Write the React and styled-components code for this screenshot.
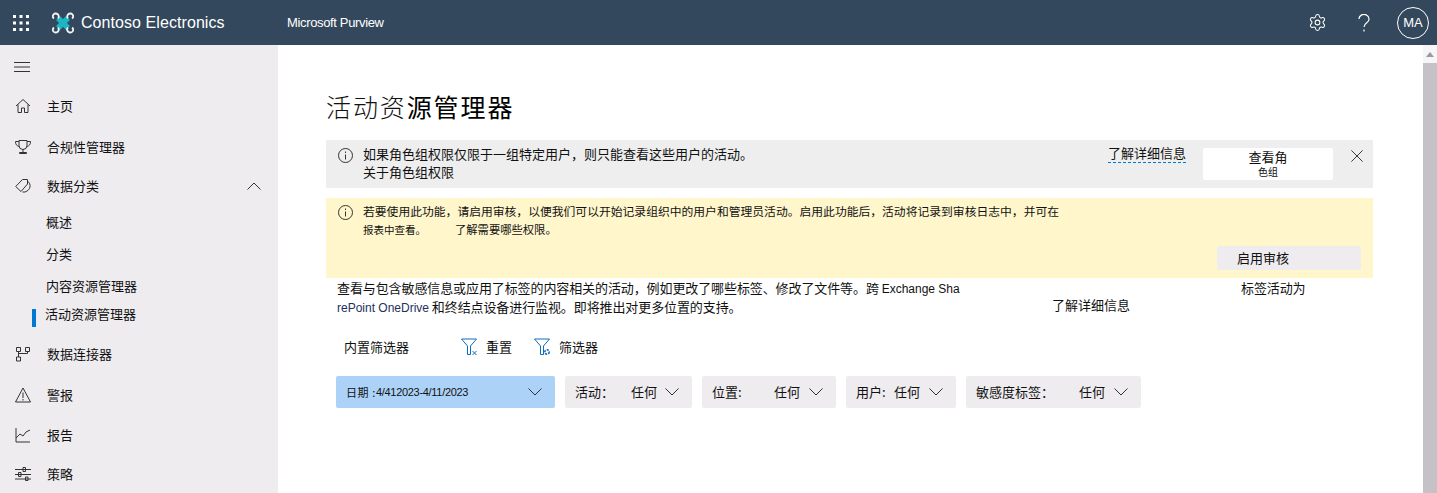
import React from 'react';
import styled, { createGlobalStyle } from 'styled-components';
import { Settings } from 'lucide-react';

const CJK = '"Noto Sans CJK SC", "Liberation Sans", sans-serif';
const LATIN = '"Liberation Sans", "Noto Sans CJK SC", sans-serif';

const Global = createGlobalStyle`
  html, body {
    margin: 0;
    height: 100%;
    overflow: hidden;
    background: #fff;
  }
  #root {
    height: 100%;
  }
  * {
    box-sizing: border-box;
  }
`;

const Page = styled.div`
  display: flex;
  flex-direction: column;
  height: 100%;
  color: #111;
  font: 13px/18px ${CJK};
`;

const TopBar = styled.header`
  display: flex;
  align-items: center;
  flex: 0 0 45px;
  padding-left: 13px;
  background: #33485c;
  color: #fff;
`;

const Brand = styled.div`
  display: flex;
  align-items: center;
  gap: 7px;
  margin-left: 23px;
  width: 235px;
  font: 16px/20px ${LATIN};
  letter-spacing: 0.07px;
`;

const Product = styled.div`
  font: 13px/20px ${LATIN};
  letter-spacing: -0.35px;
`;

const TopActions = styled.div`
  display: flex;
  align-items: center;
  margin-left: auto;
  margin-right: 8px;
`;

const HelpMark = styled.span`
  display: flex;
  margin: 0 27px 0 31px;
`;

const Avatar = styled.div`
  display: flex;
  align-items: center;
  justify-content: center;
  width: 32px;
  height: 32px;
  border: 1px solid #fff;
  border-radius: 50%;
  font: 13px/1 ${LATIN};
`;

const Body = styled.div`
  display: flex;
  flex: 1;
  min-height: 0;
`;

const Sidebar = styled.nav`
  flex: 0 0 278px;
  background: #efecf0;
  overflow: hidden;
`;

const Burger = styled.div`
  display: flex;
  align-items: center;
  height: 41px;
  padding-left: 14px;
`;

const NavRow = styled.div`
  display: flex;
  align-items: center;
  height: ${(p) => p.$h || 40}px;
  padding-left: 15px;
`;

const NavIcon = styled.span`
  display: flex;
  align-items: center;
  width: 32px;
`;

const NavEnd = styled.span`
  display: flex;
  margin-left: auto;
  margin-right: 17px;
`;

const SubList = styled.div`
  padding-bottom: 9px;
`;

const SubRow = styled.div`
  position: relative;
  display: flex;
  align-items: center;
  height: ${(p) => p.$h}px;
  padding-left: ${(p) => (p.$active ? 45 : 46)}px;
  ${(p) =>
    p.$active &&
    `
    &::before {
      content: '';
      position: absolute;
      left: 32px;
      top: 7px;
      width: 4px;
      height: 18px;
      background: #0078d4;
    }
  `}
`;

const Main = styled.main`
  flex: 1;
  min-width: 0;
  padding: 43px 50px 0 48px;
`;

const Title = styled.h1`
  margin: 0 0 16px;
  font: 400 25px/36px ${CJK};
  letter-spacing: 1.9px;
  color: #000;
`;

const Thin = styled.span`
  font-weight: 300;
  color: #111;
`;

const Banner = styled.section`
  display: flex;
  height: ${(p) => p.$h}px;
  margin-bottom: ${(p) => p.$mb || 0}px;
  padding-left: 12px;
  background: ${(p) => p.$bg};
`;

const InfoMark = styled.span`
  flex: 0 0 25px;
  padding-top: ${(p) => p.$top}px;
`;

const NoticeText = styled.div`
  flex: 0 0 745px;
  padding-top: 5px;
`;

const LearnLink = styled.a`
  flex: 0 0 95px;
  padding-top: 4px;
  span {
    border-bottom: 1px dashed #0078d4;
  }
`;

const ViewButton = styled.button`
  display: flex;
  flex-direction: column;
  align-items: center;
  flex: 0 0 130px;
  height: 32px;
  margin-top: 8px;
  padding: 0;
  border: 0;
  border-radius: 2px;
  background: #fff;
  color: #111;
  font: 13px/18px ${CJK};
  small {
    font-size: 10px;
    line-height: 12px;
  }
`;

const CloseBox = styled.span`
  display: flex;
  margin: 10px 0 0 18px;
`;

const AuditText = styled.div`
  flex: 0 0 700px;
  padding-top: 4px;
  font-size: 11.8px;
  white-space: nowrap;
  small {
    font-size: 10.5px;
  }
  em {
    margin-left: 29px;
    font-size: 11.3px;
    font-style: normal;
  }
`;

const AuditButton = styled.button`
  flex: 0 0 144px;
  align-self: flex-end;
  height: 24px;
  margin: 0 12px 8px auto;
  padding: 0 0 0 20px;
  border: 0;
  border-radius: 2px;
  background: #efecf0;
  color: #111;
  font: 13px/24px ${CJK};
  text-align: left;
`;

const Description = styled.div`
  display: grid;
  grid-template-columns: 715px 189px auto;
  grid-template-rows: 19px 20px;
  align-items: center;
  padding-left: 11px;
  letter-spacing: -0.1px;
`;

const Latin = styled.span`
  font: 12px ${LATIN};
  letter-spacing: 0;
  color: ${(p) => p.$color || 'inherit'};
`;

const RaisedLink = styled.span`
  margin-bottom: 4px;
  letter-spacing: 0;
`;

const FilterBar = styled.div`
  display: flex;
  align-items: center;
  height: 26px;
  margin: 17px 0 16px;
  padding-left: 18px;
`;

const FilterTitle = styled.span`
  flex: 0 0 117px;
`;

const FilterAction = styled.span`
  display: flex;
  align-items: center;
  gap: 8px;
  margin-right: 22px;
`;

const Chips = styled.div`
  display: flex;
  gap: 10px;
  margin-left: 10px;
`;

const Chip = styled.div`
  display: flex;
  align-items: center;
  width: ${(p) => p.$w}px;
  height: 32px;
  padding-left: 10px;
  border-radius: 2px;
  background: ${(p) => (p.$on ? '#acd3f7' : '#efecf0')};
  font-size: ${(p) => (p.$on ? 11 : 13)}px;
  svg {
    margin-left: auto;
    margin-right: 13px;
  }
`;

const ChipLabel = styled.span`
  flex: 0 0 ${(p) => p.$w}px;
`;

const DateKey = styled.span`
  flex: 0 0 28px;
  letter-spacing: 0.6px;
  white-space: nowrap;
`;

const DateValue = styled.span`
  font: 11px ${LATIN};
  letter-spacing: -0.3px;
`;

const Scrollbar = styled.aside`
  display: flex;
  flex-direction: column;
  align-items: center;
  flex: 0 0 14px;
  background: #f6f5f7;
`;

const ScrollUp = styled.span`
  flex: 0 0 5px;
  width: 0;
  margin: 7px 0 6px;
  border-left: 4px solid transparent;
  border-right: 4px solid transparent;
  border-bottom: 5px solid #9b999e;
`;

const ScrollThumb = styled.span`
  flex: 1;
  width: 14px;
  background: #c4c2c6;
`;

const Stroke = ({ size = 16, children }) => (
  <svg width={size} height={size} viewBox="0 0 16 16" fill="none" stroke="#333" strokeWidth="1">
    {children}
  </svg>
);

const Chevron = ({ up }) => (
  <svg width="14" height="8" viewBox="0 0 14 8" fill="none" stroke="#333">
    <path d={up ? 'M.5 7.5L7 1l6.5 6.5' : 'M.5.5L7 7l6.5-6.5'} />
  </svg>
);

const Waffle = () => (
  <svg width="16" height="16" viewBox="0 0 16 16" fill="#fff">
    {[0, 6.5, 13].map((y) =>
      [0, 6.5, 13].map((x) => <rect key={`${x}-${y}`} x={x} y={y} width="3" height="3" />),
    )}
  </svg>
);

const Logo = () => (
  <svg width="22" height="22" viewBox="0 0 22 22" fill="none">
    <path d="M6 6l10 10M16 6L6 16" stroke="#1cb5c4" strokeWidth="5.5" />
    <g stroke="#f0f4f6" strokeWidth="1.8">
      <path d="M6 6.5A3 3 0 1 0 1.5 2.5a3 3 0 0 0 .4 4" />
      <path d="M16 6.5a3 3 0 1 1 4.5-4 3 3 0 0 1-.4 4" />
      <path d="M6 15.5a3 3 0 1 1-4.5 4 3 3 0 0 1 .4-4" />
      <path d="M16 15.5a3 3 0 1 0 4.5 4 3 3 0 0 0-.4-4" />
    </g>
  </svg>
);

const Help = () => (
  <svg width="12" height="18" viewBox="0 0 12 18" fill="none" stroke="#fff" strokeWidth="1.2">
    <path d="M1 5a5 4.5 0 1 1 8 3.5C7 10 6 11 6 13M6 15.5v2" />
  </svg>
);

const Info = () => (
  <svg width="15" height="15" viewBox="0 0 15 15" fill="none" stroke="#333">
    <circle cx="7.5" cy="7.5" r="7" />
    <path d="M7.5 6.5v5M7.5 3.5v1.5" />
  </svg>
);

const Funnel = ({ badge }) => (
  <svg width="17" height="18" viewBox="0 0 17 18" fill="none" stroke="#0f6cbd">
    <path d="M.5 1h15L9.5 8v8.5h-3V8z" />
    {badge === 'x' ? (
      <path d="M11.5 13l4 4M15.5 13l-4 4" />
    ) : (
      <circle cx="13" cy="14" r="2.2" strokeWidth="1.6" strokeDasharray="2 1" />
    )}
  </svg>
);

const icons = {
  home: <path d="M1 8l7-6.5L15 8M3 6.5v8h3.5V10h3v4.5H13v-8" />,
  trophy: (
    <path d="M4 1.5h8v5a4 4 0 0 1-8 0zM4 2.5H.5c0 3 1.2 4.5 3.8 5M12 2.5h3.5c0 3-1.2 4.5-3.8 5M8 10.5v3M4.5 14.5h7v-1h-7z" />
  ),
  tag: (
    <g>
      <path d="M.7 8.5L7.5 1.5h5V6L6 13.5z" />
      <path d="M12.5 3C16.5 6 16 12 10 14H7.5" />
    </g>
  ),
  connector: <path d="M1.5 1.5h4v4h-4zM10.5 1.5h4v4h-4zM1.5 11h4v4h-4zM3.5 5.5V11M12.5 5.5v2h-9" />,
  alert: <path d="M8 1L.5 15h15zM8 5.5v5.5M8 12v1.5" />,
  chart: <path d="M1 1v14h14M1 11l4-4 3 2 3-4 4-2" />,
  policy: (
    <path d="M0 3.5h16M0 8.5h16M0 13h16M8 1.5h2.5v4H8zM3.5 6.5H6v4H3.5zM10.5 11H13v3.5h-2.5z" />
  ),
};

const NavItem = ({ icon, label, h, end }) => (
  <NavRow $h={h}>
    <NavIcon>
      <Stroke>{icons[icon]}</Stroke>
    </NavIcon>
    {label}
    {end && <NavEnd>{end}</NavEnd>}
  </NavRow>
);

const FilterChip = ({ w, labelW, label }) => (
  <Chip $w={w}>
    <ChipLabel $w={labelW}>{label}</ChipLabel>
    任何
    <Chevron />
  </Chip>
);

const App = () => (
  <Page>
    <Global />
    <TopBar>
      <Waffle />
      <Brand>
        <Logo />
        Contoso Electronics
      </Brand>
      <Product>Microsoft Purview</Product>
      <TopActions>
        <Settings size={19} strokeWidth={1.3} />
        <HelpMark>
          <Help />
        </HelpMark>
        <Avatar>MA</Avatar>
      </TopActions>
    </TopBar>
    <Body>
      <Sidebar>
        <Burger>
          <Stroke>
            <path d="M0 4.5h16M0 9h16M0 13.5h16" />
          </Stroke>
        </Burger>
        <NavItem icon="home" label="主页" />
        <NavItem icon="trophy" label="合规性管理器" h={41} />
        <NavItem icon="tag" label="数据分类" h={38} end={<Chevron up />} />
        <SubList>
          <SubRow $h={33}>概述</SubRow>
          <SubRow $h={32}>分类</SubRow>
          <SubRow $h={32}>内容资源管理器</SubRow>
          <SubRow $h={23} $active>
            活动资源管理器
          </SubRow>
        </SubList>
        <NavItem icon="connector" label="数据连接器" />
        <NavItem icon="alert" label="警报" h={41} />
        <NavItem icon="chart" label="报告" h={39} />
        <NavItem icon="policy" label="策略" />
      </Sidebar>
      <Main>
        <Title>
          <Thin>活动资</Thin>源管理器
        </Title>
        <Banner $bg="#eeeeee" $h={48} $mb={10}>
          <InfoMark $top={8}>
            <Info />
          </InfoMark>
          <NoticeText>
            如果角色组权限仅限于一组特定用户，则只能查看这些用户的活动。
            <br />
            关于角色组权限
          </NoticeText>
          <LearnLink>
            <span>了解详细信息</span>
          </LearnLink>
          <ViewButton>
            查看角
            <small>色组</small>
          </ViewButton>
          <CloseBox>
            <Stroke size={12}>
              <path d="M.5.5l15 15M15.5.5l-15 15" strokeWidth="1.3" />
            </Stroke>
          </CloseBox>
        </Banner>
        <Banner $bg="#fff6cc" $h={80}>
          <InfoMark $top={7}>
            <Info />
          </InfoMark>
          <AuditText>
            若要使用此功能，请启用审核，以便我们可以开始记录组织中的用户和管理员活动。启用此功能后，活动将记录到审核日志中，并可在
            <br />
            <small>报表中查看。</small>
            <em>了解需要哪些权限。</em>
          </AuditText>
          <AuditButton>启用审核</AuditButton>
        </Banner>
        <Description>
          <span>
            查看与包含敏感信息或应用了标签的内容相关的活动，例如更改了哪些标签、修改了文件等。跨{' '}
            <Latin>Exchange Sha</Latin>
          </span>
          <span />
          <span>标签活动为</span>
          <span>
            <Latin $color="#24305e">rePoint OneDrive</Latin> 和终结点设备进行监视。即将推出对更多位置的支持。
          </span>
          <RaisedLink>了解详细信息</RaisedLink>
        </Description>
        <FilterBar>
          <FilterTitle>内置筛选器</FilterTitle>
          <FilterAction>
            <Funnel badge="x" />
            重置
          </FilterAction>
          <FilterAction>
            <Funnel badge="gear" />
            筛选器
          </FilterAction>
        </FilterBar>
        <Chips>
          <Chip $w={219} $on>
            <DateKey>日期 :</DateKey>
            <DateValue>4/412023-4/11/2023</DateValue>
            <Chevron />
          </Chip>
          <FilterChip w={127} labelW={56} label="活动：" />
          <FilterChip w={134} labelW={62} label="位置:" />
          <FilterChip w={110} labelW={38} label="用户:" />
          <FilterChip w={175} labelW={103} label="敏感度标签：" />
        </Chips>
      </Main>
      <Scrollbar>
        <ScrollUp />
        <ScrollThumb />
      </Scrollbar>
    </Body>
  </Page>
);

export default App;
